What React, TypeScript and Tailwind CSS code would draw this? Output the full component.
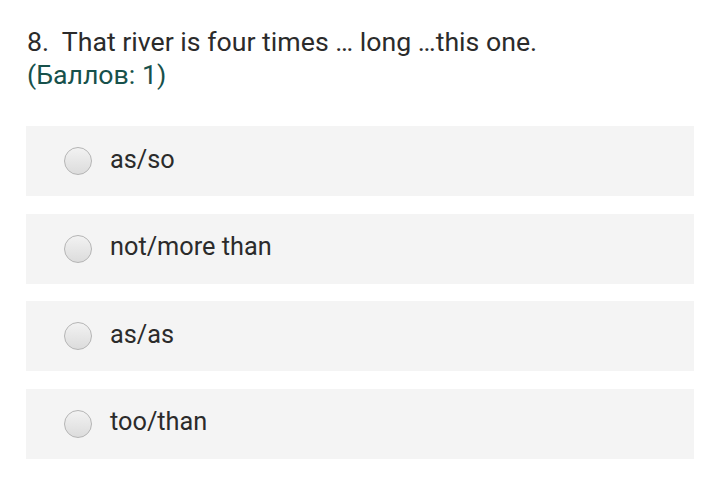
import React from 'react';

const OPTIONS = ['as/so', 'not/more than', 'as/as', 'too/than'];

function Radio() {
  return (
    <span className="w-[28px] h-[28px] rounded-full border border-[#b5b5b5] bg-gradient-to-b from-[#f2f2f2] to-[#dcdcdc] shrink-0" />
  );
}

export default function App() {
  return (
    <div className="w-[720px] h-[493px] bg-white font-['Roboto',sans-serif] pt-[26px] px-[26px]">
      <div className="text-[26.7px] leading-[33px] pl-[1px]">
        <p className="text-[#2b2b2b]">8.&nbsp; That river is four times … long …this one.</p>
        <p className="text-[#17514b]">(Баллов: 1)</p>
      </div>
      <div className="mt-[34px] flex flex-col gap-[17.5px] w-[668px]">
        {OPTIONS.map((o) => (
          <div key={o} className="h-[70px] bg-[#f4f4f4] flex items-center pl-[38px] gap-[18px]">
            <Radio />
            <span className="text-[25.3px] text-[#2b2b2b] -mt-[3px]">{o}</span>
          </div>
        ))}
      </div>
    </div>
  );
}
